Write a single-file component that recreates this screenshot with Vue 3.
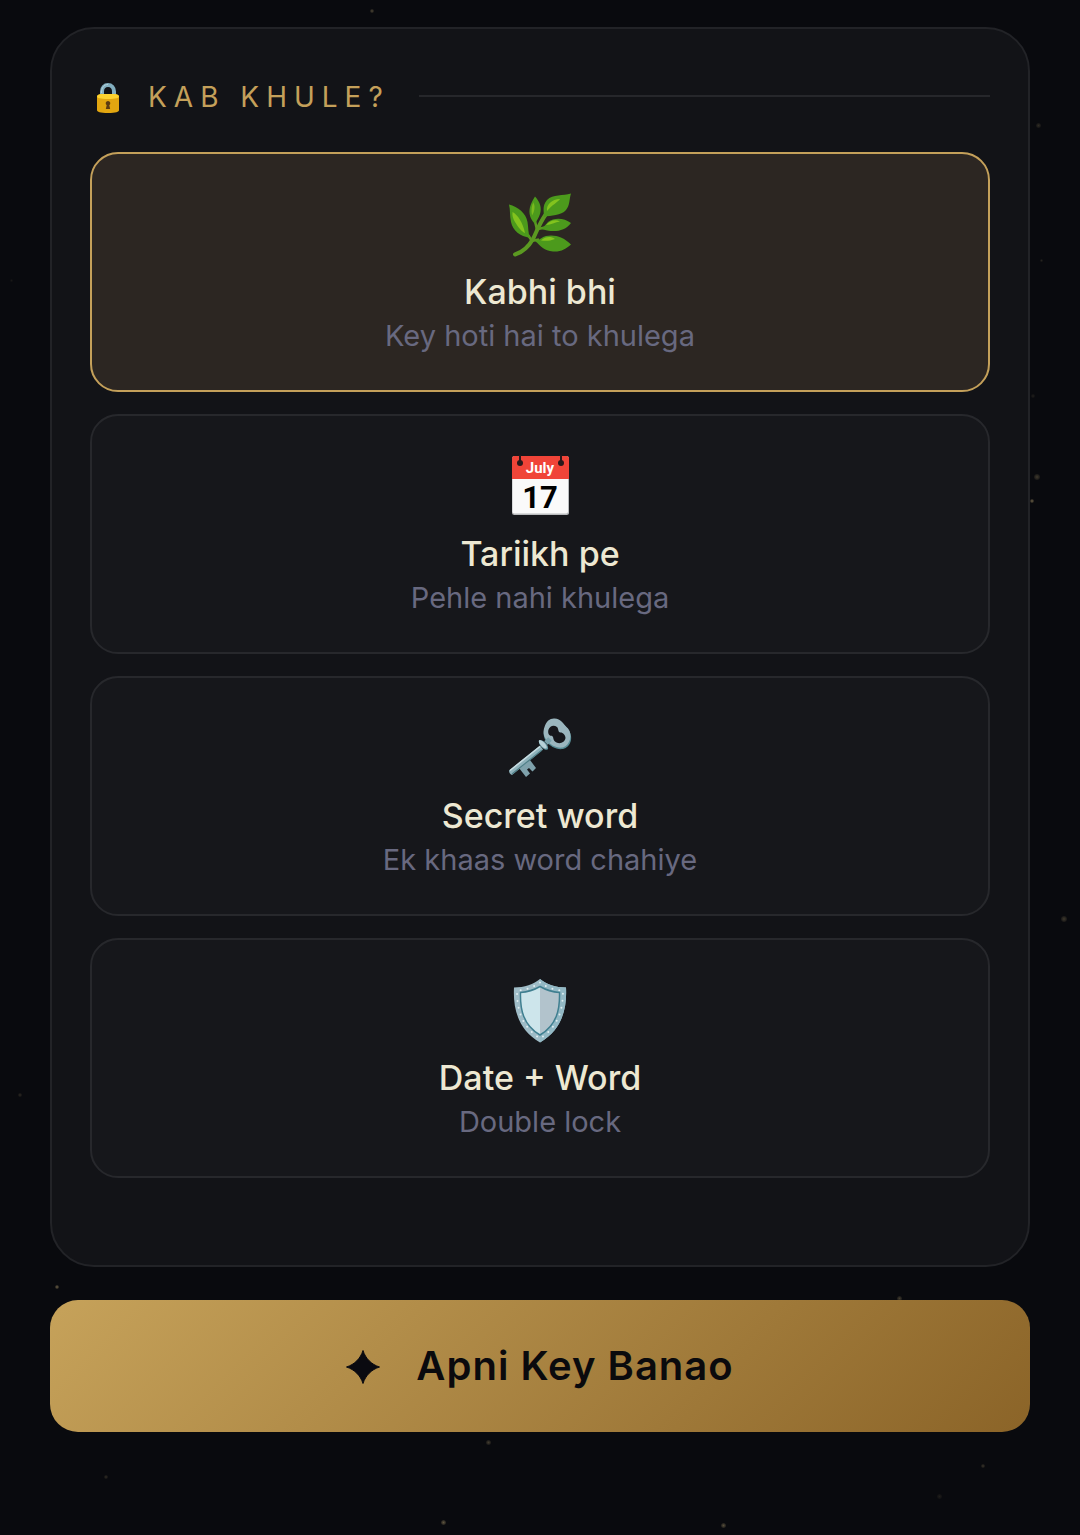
<template>
  <main class="page">
    <!-- Background particles -->
    <div class="particles" aria-hidden="true">
      <span v-for="(dot, index) in particles" :key="index" class="particle"
        :style="{ left: dot.x + '%', top: dot.y + '%', width: dot.size + 'px', height: dot.size + 'px', opacity: dot.alpha }"></span>
    </div>

    <section class="card">
      <h2 class="card-title">
        <svg class="lock" viewBox="0 -4 22 34" aria-hidden="true">
          <path d="M5 16V8.500C5 4.500 7.500 2 11 2s6 2.500 6 6.500V16" fill="none" stroke="#82aebf" stroke-width="4" />
          <path d="M4.500 10C4.500 4.500 7 1.500 11 1.500" fill="none" stroke="#b5d3dc" stroke-width="1" />
          <path d="M0 13.500C0 12 2 11 5 11h12c3 0 5 1 5 2.500V27c0 2-3 3-11 3S0 29 0 27z" fill="#e2a610" />
          <path d="M0 13.500C0 12 2 11 5 11h12c3 0 5 1 5 2.500S19 16 11 16 0 15 0 13.500z" fill="#fdd32f" />
          <path d="M11 18a2.300 2.300 0 0 1 1.300 4.200L13.200 26H8.800l.9-3.800A2.300 2.300 0 0 1 11 18z" fill="#5c3b12" />
        </svg>
        <span class="card-title-text">Kab khule?</span>
      </h2>

      <div class="options">
        <button v-for="option in options" :key="option.id" type="button" class="option"
          :class="{ active: option.id === selected }" :aria-pressed="option.id === selected"
          @click="selected = option.id">
          <svg v-if="option.id === 'anytime'" class="icon" viewBox="0 0 64 64" aria-hidden="true">
            <path d="M7 61.500C15 59 21 53 25 46C29 38 31 31 38 21" fill="none" stroke="#5b9921" stroke-width="4" stroke-linecap="round" />
            <path d="M23 48L31 46.500M30 36L37 34.500M24 48L20 42M29 37L27 28" fill="none" stroke="#5b9921" stroke-width="2.500" />
            <path d="M1 11.500C10 14 18 20 19.500 29C20.500 35 20 40 22 45C12 43 5 38 3 29C1.500 23 2.500 17 1 11.500z" fill="#4c9a1c" />
            <path d="M27 3.500C32 9 34 15 32 21C31 25 28 28 27 31C22 26 20.500 20 22 14C23 10 25 7 27 3.500z" fill="#4c9a1c" />
            <path d="M63 .5C61 7 62 12 58 17C53 23 43 22 36 24C36 18 34 13 39 7C45 1 55 3 63 .5z" fill="#4c9a1c" />
            <path d="M63 30C56 25 47 24 40 29C38 31 36 34 33 36C43 39 56 40 63 30z" fill="#4c9a1c" />
            <path d="M63 51.500C56 44 46 41 38 43C34 44 32 47 27 48C33 53 36 58 45 58.500C53 59 58 56 63 51.500z" fill="#4c9a1c" />
            <path d="M4.500 19C10 22 15 30 17 40C14 39 10 34 7 29C5 26 4 22 4.500 19z" fill="#83c31e" />
            <path d="M25.500 10C27.500 13 26.500 19 24 22.500C23 17 23.500 13 25.500 9z" fill="#7aba1e" />
            <path d="M52 6C50 9 44 12 39 18C38 12 44 6 52 6z" fill="#83c31e" />
            <path d="M52 28.500C47 29 43 32 38 32C42 27.500 47 26 52 28.500z" fill="#83c31e" />
            <path d="M47 46C42 48 38 48 33 47.500C37 43.500 43 43 47 46z" fill="#83c31e" />
          </svg>

          <svg v-else-if="option.id === 'date'" class="icon" viewBox="0 0 64 64" aria-hidden="true">
            <rect x="4" y="1" width="57" height="59" rx="2.500" fill="#b9bbbd" />
            <path d="M4.500 22H60v34.500a2 2 0 0 1-2 2H6.500a2 2 0 0 1-2-2z" fill="#fafafa" />
            <path d="M4 24V3.500A2.500 2.500 0 0 1 6.500 1h52A2.500 2.500 0 0 1 61 3.500V24z" fill="#f04438" />
            <path d="M12 0v8M53 0v8" stroke="#27191b" stroke-width="2" />
            <circle cx="12" cy="8" r="3" fill="#27191b" />
            <circle cx="53" cy="8" r="3" fill="#27191b" />
            <text x="32" y="18" class="month">July</text>
            <text x="32" y="53" class="day">17</text>
          </svg>

          <svg v-else-if="option.id === 'word'" class="icon" viewBox="0 0 64 64" aria-hidden="true">
            <path d="M11 51L18 60L22 56.500L19 52.500L21 51L24.500 54.500L28 51L22 43z" fill="#7fa2ac" />
            <path d="M1 53.500L32 28.500L35 32.500L4 58C2 57.500 1 55.500 1 53.500z" fill="#8fb2bb" />
            <path d="M2 53.500L32 29.500" stroke="#c8dde2" stroke-width="1.500" />
            <path d="M4 57L34 33" stroke="#4f7f88" stroke-width="1.200" />
            <path fill-rule="evenodd" d="M37 11C39 5 43 2 47 2C53 3 55 7 60 12C66 20 63 30 55 32C48 33 42 29 39 25C35 21 35 15 37 11zM40 13C39 17 41 20 43.500 20C46 21 44 24 47 26C51 29 57 27 58.500 22C59 18 56 15 53 14.500C50 14 52 11 50 9C46 6 41 8 40 13z" fill="#568c95" />
            <path fill-rule="evenodd" d="M36.500 10C38.500 4 42 1.200 46.500 1.500C53 2 55 6.500 60 11.500C65 18 62 28 55 30.500C48 31.500 42 27.500 39 23.500C35 19 35 14 36.500 10zM40.500 12.500C39.500 16 41 19 43.500 18.800C46 19.500 44.500 22.500 47 24.500C51 28 57 25.500 57.500 21C57.500 18 55 15.500 52.500 15.500C49.500 15 51 12 49 10C46 7.500 42 8.500 40.500 12.500z" fill="#9bb6be" />
            <path d="M38 26L42 22" stroke="#79a2ab" stroke-width="5" />
            <ellipse cx="35.500" cy="28" rx="3" ry="6" transform="rotate(-43 35.500 28)" fill="#5e919b" />
            <ellipse cx="34.800" cy="27.300" rx="2.200" ry="5.400" transform="rotate(-43 34.800 27.300)" fill="#b7d1d7" />
          </svg>

          <svg v-else class="icon" viewBox="0 0 64 64" aria-hidden="true">
            <path d="M32 0C26 5 16 8.500 6 8.500C5 28 9 50 32 63.500C55 50 59 28 58 8.500C48 8.500 38 5 32 0z" fill="#9fbcc7" />
            <path d="M32 0C38 5 48 8.500 58 8.500C59 28 55 50 32 63.500z" fill="#92b8c4" />
            <path d="M32 3.500C26 8 18 11 9 11.500C9 30 13 47 32 59.500C51 47 55 30 55 11.500C46 11 38 8 32 3.500z"
              fill="none" stroke="#e0eef1" stroke-width="2" stroke-linecap="round" stroke-dasharray="0 7" />
            <path d="M32 7.500C26 11 20 13 12.500 13.500C12 30 15 46 32 56C49 46 52 30 51.500 13.500C44 13 38 11 32 7.500z" fill="#b2c3cc" />
            <path d="M32 7.500C26 11 20 13 12.500 13.500C12 30 15 46 32 56z" fill="#cde5eb" />
            <path d="M32 7.500C26 11 20 13 12.500 13.500C12 30 15 46 32 56C49 46 52 30 51.500 13.500C44 13 38 11 32 7.500z" fill="none" stroke="#3f7f90" stroke-width="1.500" />
          </svg>

          <span class="option-title">{{ option.title }}</span>
          <span class="option-text">{{ option.text }}</span>
        </button>
      </div>
    </section>

    <button type="button" class="submit">
      <svg class="spark" viewBox="0 0 34 36" aria-hidden="true">
        <path d="M17 2.500C19.500 10.500 25.500 16.500 33.500 19C25.500 21.500 19.500 27.500 17 35.500C14.500 27.500 8.500 21.500 .5 19C8.500 16.500 14.500 10.500 17 2.500z"
          fill="#0a0a10" stroke="#0a0a10" stroke-linejoin="round" />
      </svg>
      <span>Apni Key Banao</span>
    </button>
  </main>
</template>

<script setup>
import { ref } from 'vue'

const selected = ref('anytime')

const options = [
  { id: 'anytime', title: 'Kabhi bhi', text: 'Key hoti hai to khulega' },
  { id: 'date', title: 'Tariikh pe', text: 'Pehle nahi khulega' },
  { id: 'word', title: 'Secret word', text: 'Ek khaas word chahiye' },
  { id: 'both', title: 'Date + Word', text: 'Double lock' },
]

// x and y are percentages of the page
const particles = [
  { x: 34.3, y: 0.6, size: 4, alpha: 0.35 },
  { x: 95.9, y: 8, size: 5, alpha: 0.2 },
  { x: 96.3, y: 16.9, size: 3, alpha: 0.15 },
  { x: 95.5, y: 25.7, size: 4, alpha: 0.12 },
  { x: 95.7, y: 30.9, size: 6, alpha: 0.28 },
  { x: 95.4, y: 32.5, size: 4, alpha: 0.5 },
  { x: 98.2, y: 59.7, size: 6, alpha: 0.28 },
  { x: 0.9, y: 18.2, size: 3, alpha: 0.08 },
  { x: 1.7, y: 71.2, size: 4, alpha: 0.18 },
  { x: 5.1, y: 83.7, size: 4, alpha: 0.5 },
  { x: 83.1, y: 84.4, size: 5, alpha: 0.3 },
  { x: 45, y: 93.8, size: 5, alpha: 0.3 },
  { x: 9.6, y: 96.1, size: 4, alpha: 0.2 },
  { x: 90.8, y: 95.4, size: 4, alpha: 0.25 },
  { x: 86.8, y: 97.3, size: 5, alpha: 0.12 },
  { x: 40.8, y: 99, size: 5, alpha: 0.45 },
  { x: 66.8, y: 99.2, size: 5, alpha: 0.4 },
]
</script>

<style>
body {
  margin: 0;
  background: #090a0e;
}
</style>

<style scoped>
.page {
  position: relative;
  box-sizing: border-box;
  min-height: 100vh;
  padding: 27px 50px 100px;
  overflow: hidden;
  background: #090a0e;
  font-family: Inter, "Liberation Sans", sans-serif;
}

.particles {
  position: absolute;
  inset: 0;
}

.particle {
  position: absolute;
  border-radius: 50%;
  background: radial-gradient(circle, #c9b27c, transparent);
}

.card {
  position: relative;
  padding: 47px 38px 87px;
  border: 2px solid #222327;
  border-radius: 44px;
  background: #121317;
}

.card-title {
  display: flex;
  align-items: center;
  gap: 29px;
  margin: 0 0 36px;
  padding-left: 7px;
  color: #c4a05a;
  font-size: 28px;
  font-weight: 400;
  line-height: 38px;
  letter-spacing: 7px;
  text-transform: uppercase;
}

.card-title-text {
  padding-top: 2px;
}

/* Rule that fills the rest of the heading row */
.card-title::after {
  content: '';
  flex: 1;
  height: 2px;
  background: #26272b;
}

.lock {
  width: 22px;
  height: 34px;
}

.options {
  display: flex;
  flex-direction: column;
  gap: 22px;
}

.option {
  display: flex;
  flex-direction: column;
  align-items: center;
  padding: 39px 20px 32px;
  border: 2px solid #27282c;
  border-radius: 28px;
  background: #16171b;
  font-family: inherit;
  cursor: pointer;
}

.option.active {
  border-color: #c4a05a;
  background: #2c2622;
}

.icon {
  width: 64px;
  height: 64px;
  margin-bottom: 13px;
  overflow: visible;
}

.month,
.day {
  font-family: Roboto, sans-serif;
  font-weight: 700;
  text-anchor: middle;
}

.month {
  font-size: 15px;
  fill: #fff;
}

.day {
  font-size: 31px;
  fill: #000;
}

.option-title {
  color: #ede8d2;
  font-size: 34px;
  font-weight: 500;
  line-height: 44px;
}

.option-text {
  color: #686980;
  font-size: 29px;
  line-height: 44px;
}

.submit {
  position: relative;
  display: flex;
  align-items: center;
  justify-content: center;
  gap: 36px;
  width: 100%;
  margin-top: 33px;
  padding: 41px 20px;
  border: 0;
  border-radius: 28px;
  background: linear-gradient(135deg, #c6a25a, #8b6428);
  color: #0a0a0d;
  font-family: inherit;
  font-size: 40px;
  font-weight: 600;
  line-height: 50px;
  letter-spacing: 1px;
  cursor: pointer;
}

.spark {
  width: 34px;
  height: 36px;
}
</style>
